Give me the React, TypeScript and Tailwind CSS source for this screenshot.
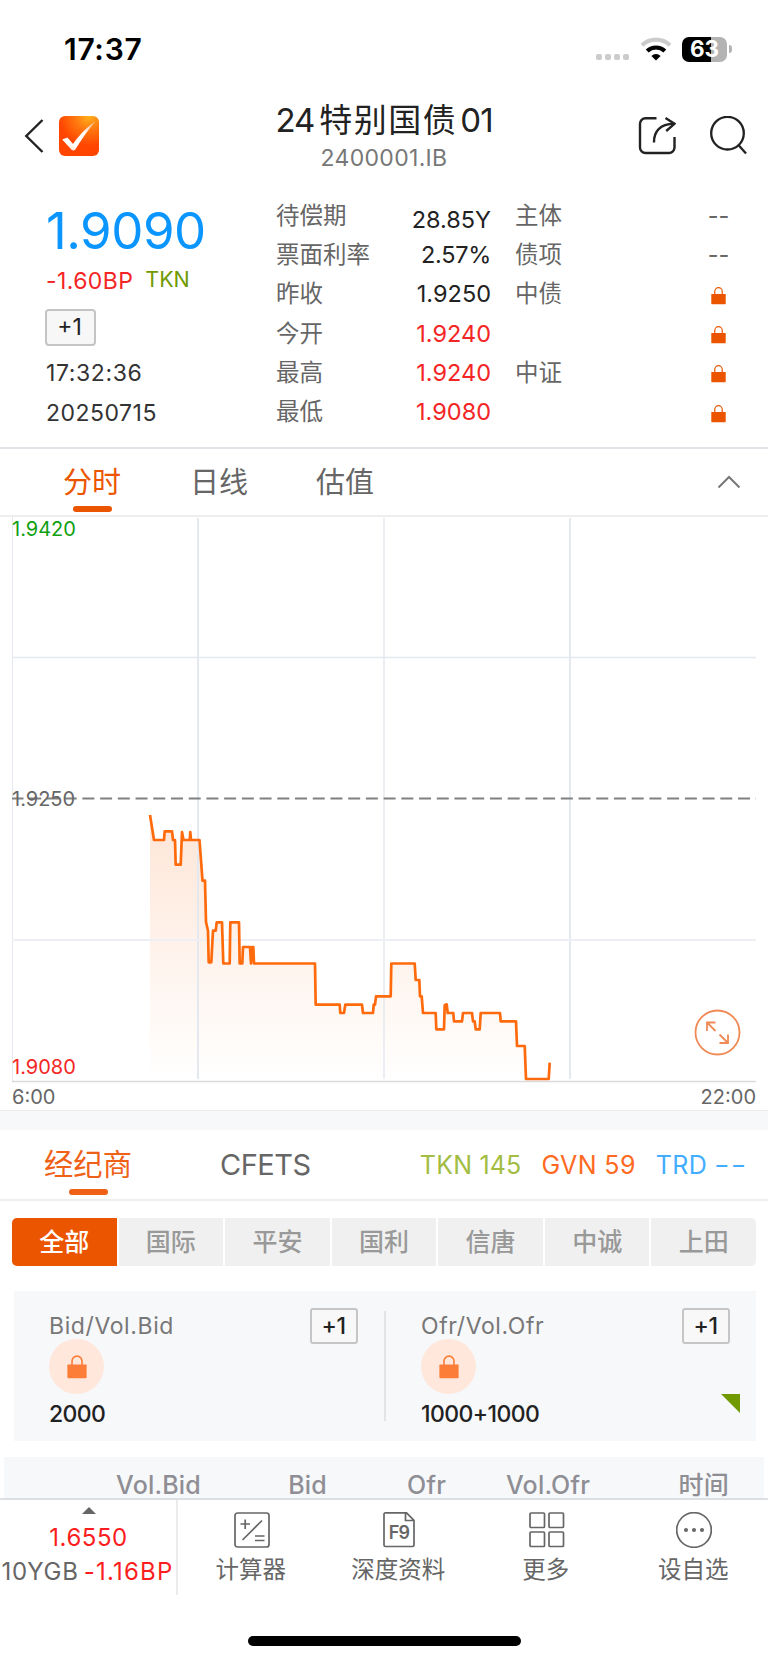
import React from 'react';

const quoteRows = [
  { label: '待偿期', value: '28.85Y', valueClass: 'text-[#222] pt-[8px]', side: '主体', mark: '--' },
  { label: '票面利率', value: '2.57%', valueClass: 'text-[#222] tracking-[-0.3px]', side: '债项', mark: '--' },
  { label: '昨收', value: '1.9250', valueClass: 'text-[#222]', side: '中债', mark: 'lock' },
  { label: '今开', value: '1.9240', valueClass: 'text-[#f42525]', side: '', mark: 'lock' },
  { label: '最高', value: '1.9240', valueClass: 'text-[#f42525]', side: '中证', mark: 'lock' },
  { label: '最低', value: '1.9080', valueClass: 'text-[#f42525]', side: '', mark: 'lock' },
];

const brokers = ['全部', '国际', '平安', '国利', '信唐', '中诚', '上田'];

const linePoints =
  '150,815 154,840 164,840 164.7,831.3 172,831.3 173,840 175,840 175.7,864.7 180.7,864.7 182,832 183.5,840 189.7,840 190.3,832 191,840 199.5,840 202.5,880.7 205,880.7 206,922 208,930.7 208.7,962.3 211.3,962.3 213,930.7 215.7,930.7 216.7,922.3 222,922.3 223.3,963.5 229.7,963.5 230.3,922.3 239,922.3 239.7,963.5 242.3,963.5 243,947 250,947 251,963.5 252,947 253.3,947 254,963.5 315,963.5 315.7,1004.7 339.7,1004.7 340.3,1013 344,1013 345.3,1004.7 362,1004.7 363,1013 373,1013 373.7,1004.7 375,1004.7 376,996.3 390.7,996.3 391.3,963.5 414.7,963.5 415.7,980 419.3,980 420,996.3 421.7,996.3 423,1013 435.7,1013 436.3,1029.3 444,1029.3 444.7,1005.3 446.7,1004.3 447.7,1013 453.3,1013 454,1021.3 462,1021.3 463,1013 472,1013 473,1021.3 474.7,1021.3 475.7,1029.3 479.7,1029.3 480.7,1013 500,1013 500.7,1021.3 516,1021.3 517,1046 524.7,1046 526,1079 548.7,1079 549.7,1062.7';

const LockIcon: React.FC<{ className?: string }> = ({ className }) => (
  <svg viewBox="0 0 16 19" className={className} fill="none">
    <path d="M4 9V5.2a4 4 0 0 1 8 0V9" stroke="currentColor" strokeWidth="1.3" />
    <rect x="0.3" y="7.8" width="15.4" height="11" rx="0.7" fill="currentColor" />
  </svg>
);

const StatusBar: React.FC = () => (
  <div className="flex h-[98px] shrink-0 items-center pr-9 pl-16 text-black">
    <span className="text-[30px] leading-none font-semibold tracking-[0.7px]">17:37</span>
    <div className="ml-auto flex items-center">
      <div className="mt-4 mr-[11px] flex gap-[3px]">
        <i className="size-[6px] rounded-[2px] bg-[#ccc]" />
        <i className="size-[6px] rounded-[2px] bg-[#ccc]" />
        <i className="size-[6px] rounded-[2px] bg-[#ccc]" />
        <i className="size-[6px] rounded-[2px] bg-[#ccc]" />
      </div>
      <svg width="32" height="24" viewBox="0 0 32 24" fill="none" className="mr-[10px]">
        <path d="M2 8.2a20.5 20.5 0 0 1 28 0" stroke="#ccc" strokeWidth="4.2" />
        <path d="M7.2 14a12.8 12.8 0 0 1 17.6 0" stroke="#000" strokeWidth="4.2" />
        <path d="M16 23.6l-4.6-4.7a6.6 6.6 0 0 1 9.2 0z" fill="#000" />
      </svg>
      <div className="flex h-[25px] w-[45px] items-center justify-center rounded-[7px] bg-linear-to-r from-black from-64% to-[#b3b3b3] to-64% text-[22.5px] leading-none font-bold text-white">
        63
      </div>
      <i className="ml-[2px] h-[8px] w-[3px] rounded-r-full bg-[#b3b3b3]" />
    </div>
  </div>
);

const Header: React.FC = () => (
  <header className="grid h-[82px] shrink-0 grid-cols-[1fr_auto_1fr]">
    <div className="flex items-start pt-[18px] pl-6">
      <svg width="20" height="40" viewBox="0 0 20 40" fill="none">
        <path d="M18.5 4L2.3 20l16.2 16" stroke="#222" strokeWidth="2.4" />
      </svg>
      <svg width="40" height="40" viewBox="0 0 40 40" className="ml-[15px]">
        <defs>
          <radialGradient id="logoGlow" cx="0.75" cy="0" r="0.75">
            <stop offset="0" stopColor="#ffb31c" />
            <stop offset="0.45" stopColor="#ff7a10" />
            <stop offset="1" stopColor="#ff4500" />
          </radialGradient>
          <linearGradient id="logoTick" x1="0.8" y1="0" x2="0.2" y2="1">
            <stop offset="0" stopColor="#ffb78a" />
            <stop offset="0.35" stopColor="#fff" />
            <stop offset="0.8" stopColor="#fff" />
            <stop offset="1" stopColor="#ffd9c9" />
          </linearGradient>
        </defs>
        <rect width="40" height="40" rx="6" fill="url(#logoGlow)" />
        <path d="M36.5 5.5C29 10 21 18 14 28L8.5 21.5 3.2 23.5 12.5 33.8c1.3 1.2 3 .9 4-.6C22 24 29 14 36.5 5.5z" fill="url(#logoTick)" />
      </svg>
    </div>
    <div className="flex flex-col items-center">
      <h1 className="flex h-[43px] items-center pt-px text-[33px] leading-none text-[#222]">
        <span className="tracking-[-1px]">24</span>
        <span className="mr-[3px] ml-[5px] tracking-[1.5px]">特别国债</span>
        <span className="tracking-[-1px]">01</span>
      </h1>
      <p className="flex h-[34px] items-center text-[23px] leading-none tracking-[0.3px] text-[#777]">2400001.IB</p>
    </div>
    <div className="flex items-start justify-end pt-[18px] pr-5">
      <svg width="38" height="40" viewBox="0 0 38 40" fill="none" stroke="#222" strokeWidth="2.4">
        <path d="M18.5 2.3H7.5a5.5 5.5 0 0 0-5.5 5.5V31.5a5.5 5.5 0 0 0 5.5 5.5H31a5.5 5.5 0 0 0 5.5-5.500V21" />
        <path d="M16 26.500c-.3-11 6-18.500 20-18.700" />
        <path d="M27.500 2l9 5.800-8.300 7.200" />
      </svg>
      <svg width="40" height="40" viewBox="0 0 40 40" fill="none" stroke="#222" strokeWidth="2.3" className="ml-[32px]">
        <circle cx="19.5" cy="17.200" r="16.300" />
        <path d="M30 28.500l8 9" />
      </svg>
    </div>
  </header>
);

const Quote: React.FC = () => (
  <section className="flex h-[269px] shrink-0 border-b-2 border-[#e1e2e8] pl-[45px]">
    <div className="flex w-[231px] flex-col items-start leading-none text-[#333]">
      <div className="mt-[18px] ml-px flex h-[64px] items-center text-[51px] tracking-[-0.5px] text-[#0a95ff]">1.9090</div>
      <div className="mt-px ml-px flex h-[37px] items-center text-[23px]">
        <span className="tracking-[0.4px] text-[#f42525]">-1.60BP</span>
        <span className="mb-[3px] ml-[12px] text-[21.5px] text-[#719a00]">TKN</span>
      </div>
      <div className="mt-[9px] flex h-[37px] w-[51px] items-center justify-center rounded-[4px] border-2 border-[#c4c4c4] bg-[#f7f7f7] pr-[2px] text-[23px] text-[#222]">
        +1
      </div>
      <div className="mt-[8px] ml-px flex h-[39px] items-center text-[23px] tracking-[0.6px]">17:32:36</div>
      <div className="mt-px ml-px flex h-[39px] items-center text-[23px] tracking-[0.5px]">20250715</div>
    </div>
    <div className="flex flex-1 flex-col pt-[16px]">
      {quoteRows.map((row) => (
        <div key={row.label} className="flex h-[39.3px] items-center text-[23.5px] leading-none text-[#666]">
          <span className="w-[110px]">{row.label}</span>
          <span className={`w-[105px] text-right ${row.valueClass}`}>{row.value}</span>
          <span className="ml-[24px] w-[169px]">{row.side}</span>
          <span className="flex w-[69px] justify-center">
            {row.mark === 'lock' ? <LockIcon className="mt-[2px] h-[19px] w-[15px] text-[#ec5500]" /> : row.mark}
          </span>
        </div>
      ))}
    </div>
  </section>
);

const ChartTabs: React.FC = () => (
  <nav className="flex h-[68px] shrink-0 items-start border-b-2 border-[#eee] pr-[27px] pl-[63px] text-[29px] leading-none text-[#666]">
    <div className="flex w-[58px] flex-col items-center text-[#ec5500]">
      <span className="flex h-[57px] items-center pt-[10px]">分时</span>
      <i className="h-[6px] w-[39px] rounded-full bg-[#ec5500]" />
    </div>
    <span className="ml-[69px] leading-[68px]">日线</span>
    <span className="ml-[68px] leading-[68px]">估值</span>
    <svg width="24" height="16" viewBox="0 0 24 16" fill="none" className="mt-[25px] ml-auto">
      <path d="M1.5 13.5L12 3l10.5 10.5" stroke="#777" strokeWidth="2" />
    </svg>
  </nav>
);

const PriceChart: React.FC = () => (
  <svg width="768" height="593" viewBox="0 517 768 593" className="block shrink-0" fill="none">
    <defs>
      <linearGradient id="area" x1="0" y1="815" x2="0" y2="1081" gradientUnits="userSpaceOnUse">
        <stop offset="0" stopColor="#f96a14" stopOpacity="0.17" />
        <stop offset="1" stopColor="#f96a14" stopOpacity="0" />
      </linearGradient>
    </defs>
    <polygon points={`${linePoints} 549.7,1081 150,1081`} fill="url(#area)" />
    <g stroke="#e4e8ef">
      <path d="M12.5 517V1081" />
      <path d="M198 518V1079M570 518V1079" strokeWidth="2" />
      <path d="M384 518V1079" strokeWidth="1.5" />
      <path d="M12 657.5H756" strokeWidth="1.5" />
      <path d="M12 940H756" stroke="#eeeff4" strokeWidth="2" />
    </g>
    <path d="M12 1081.5H756" stroke="#d9dade" strokeWidth="1.5" />
    <path d="M12 798.5H756" stroke="#808080" strokeWidth="2.2" strokeDasharray="12 5.72" strokeDashoffset="0.5" />
    <polyline points={linePoints} stroke="#ff6a0c" strokeWidth="2.7" strokeLinejoin="round" />
    <g fontSize="20">
      <text x="12" y="535.5" fill="#10a010">1.9420</text>
      <text x="12" y="805.5" fill="#666">1.9250</text>
      <text x="12" y="1074" fill="#f42525">1.9080</text>
      <text x="12" y="1103.5" fill="#666">6:00</text>
      <text x="756" y="1103.5" fill="#666" textAnchor="end">22:00</text>
    </g>
    <g stroke="#f08a55" strokeWidth="1.8">
      <circle cx="717.5" cy="1032.5" r="22" />
      <path d="M715.5 1031l-8.5-8.5M707 1031v-8.5h8.5" />
      <path d="M719.5 1034.5l8.5 8.5M728 1034.5v8.5h-8.5" />
    </g>
  </svg>
);

const BrokerTabs: React.FC = () => (
  <nav className="flex h-[71px] shrink-0 items-start border-b-2 border-[#eee] pl-[44px] leading-none">
    <div className="flex w-[88px] flex-col items-center text-[29.3px] whitespace-nowrap text-[#f06118]">
      <span className="flex h-[59px] items-center pt-[11px]">经纪商</span>
      <i className="h-[6px] w-[39px] rounded-full bg-[#f06118]" />
    </div>
    <span className="ml-[88px] text-[29px] leading-[70px] tracking-[-0.5px] text-[#666]">CFETS</span>
    <div className="ml-auto flex pr-[21px] text-[25px] leading-[70px]">
      <span className="tracking-[0.2px] text-[#a2bd42]">TKN 145</span>
      <span className="ml-[20px] tracking-[0.4px] text-[#ff6a22]">GVN 59</span>
      <span className="ml-[20px] flex tracking-[0.3px] text-[#43adff]">
        TRD
        <span className="ml-[7px] w-[33px] origin-left scale-x-[1.35] tracking-[1px]">--</span>
      </span>
    </div>
  </nav>
);

const BrokerFilter: React.FC = () => (
  <div className="mx-3 mt-[17px] flex h-[48px] shrink-0 gap-[2px] overflow-hidden rounded-[5px] text-[25px] font-medium">
    {brokers.map((name, i) => (
      <div
        key={name}
        className={`flex flex-1 items-center justify-center leading-none ${i === 0 ? 'bg-[#ec5500] text-white' : 'bg-[#f0f0f0] text-[#999]'}`}
      >
        {name}
      </div>
    ))}
  </div>
);

const OfferSide: React.FC<{ title: string; volume: string }> = ({ title, volume }) => (
  <div className="flex h-full flex-1 flex-col pr-[26px] pl-[35px] leading-none">
    <div className="flex h-[34px] shrink-0 items-center justify-between text-[23px] tracking-[0.6px] text-[#777]">
      {title}
      <div className="flex h-[36px] w-[48px] items-center justify-center rounded-[3px] border-2 border-[#c6c6c6] bg-[#f8f8f8] pr-px font-medium tracking-[-0.5px] text-[#222]">
        +1
      </div>
    </div>
    <div className="mt-[-4px] flex size-[55px] shrink-0 items-center justify-center rounded-full bg-[#ffe7dc]">
      <LockIcon className="h-[25px] w-[20px] text-[#fb7d38]" />
    </div>
    <span className="flex h-[40px] shrink-0 items-center text-[23px] font-medium tracking-[-0.6px] text-[#222]">{volume}</span>
  </div>
);

const BestOffers: React.FC = () => (
  <section className="relative mt-[25px] mr-3 ml-[14px] flex h-[150px] shrink-0 items-center bg-[#f7f8fa] pt-[18px] pb-[18px]">
    <OfferSide title="Bid/Vol.Bid" volume="2000" />
    <i className="h-[110px] w-[2px] shrink-0 bg-[#e3e4e8]" />
    <OfferSide title="Ofr/Vol.Ofr" volume="1000+1000" />
    <svg width="19" height="19" viewBox="0 0 19 19" className="absolute right-[16px] bottom-[28px]">
      <path d="M0 0h19v19z" fill="#719a00" />
    </svg>
  </section>
);

const TableHead: React.FC = () => (
  <div className="mx-1 mt-[16px] flex h-[41px] shrink-0 bg-[#f7f8fa] pt-[16px] text-[25px] leading-[25px] font-medium tracking-[0.2px] text-[#8e8e94]">
    <span className="w-[197px] text-right">Vol.Bid</span>
    <span className="w-[126px] text-right">Bid</span>
    <span className="w-[119px] text-right">Ofr</span>
    <span className="w-[144px] text-right">Vol.Ofr</span>
    <span className="w-[139px] text-right">时间</span>
  </div>
);

const actions = [
  {
    label: '计算器',
    icon: (
      <>
        <rect x="1" y="1" width="34" height="34" rx="2.5" />
        <path d="M6.5 12h9.5M11.2 7.5v9.5M8.5 28L28 8.5M21 24h9.5M21 28.5h9.5" />
      </>
    ),
  },
  {
    label: '深度资料',
    icon: (
      <>
        <path d="M5 .8H25.5l7.5 7.5V33a1.5 1.5 0 0 1-1.5 1.5H4.5A1.5 1.5 0 0 1 3 33V2.5A1.7 1.7 0 0 1 5 .8zM24.5 1v7.5H33" />
        <text x="18" y="27" textAnchor="middle" fontSize="18" fontWeight="600" letterSpacing="-0.8" fill="#666" stroke="none">F9</text>
      </>
    ),
  },
  {
    label: '更多',
    icon: (
      <>
        <rect x="1" y="1" width="14.5" height="14.5" rx="1" />
        <rect x="20" y="1" width="14.5" height="14.5" rx="1" />
        <rect x="1" y="20" width="14.5" height="14.5" rx="1" />
        <rect x="20" y="20" width="14.5" height="14.5" rx="1" />
      </>
    ),
  },
  {
    label: '设自选',
    icon: (
      <>
        <circle cx="18" cy="18" r="17.3" />
        <g fill="#666" stroke="none">
          <circle cx="10" cy="18" r="2" />
          <circle cx="18" cy="18" r="2" />
          <circle cx="26" cy="18" r="2" />
        </g>
      </>
    ),
  },
];

const BottomBar: React.FC = () => (
  <footer className="flex h-[97px] shrink-0 border-t-2 border-[#dcdfe4] leading-none">
    <div className="flex w-[178px] shrink-0 flex-col items-center border-r-2 border-[#ebebeb] whitespace-nowrap text-[24px]">
      <svg width="14" height="7" viewBox="0 0 14 7" className="mt-[7px] ml-px">
        <path d="M0 7L7 0l7 7z" fill="#666" />
      </svg>
      <span className="ml-px flex h-[46px] items-center pt-px tracking-[0.5px] text-[#fa1e1e]">1.6550</span>
      <span className="flex h-[23px] items-center pt-px pr-px tracking-[0.8px] text-[#666]">
        10YGB
        <span className="ml-[5px] tracking-[1.2px] text-[#fa1e1e]">-1.16BP</span>
      </span>
    </div>
    {actions.map((a) => (
      <div key={a.label} className="flex flex-1 flex-col items-center pt-[12px] text-[23.5px] text-[#666]">
        <svg width="36" height="36" viewBox="0 0 36 36" fill="none" stroke="#666" strokeWidth="1.7">
          {a.icon}
        </svg>
        <span className="mt-[10px] pr-[2px]">{a.label}</span>
      </div>
    ))}
  </footer>
);

const App: React.FC = () => {
  return (
    <div className="flex h-[1663px] w-[768px] flex-col overflow-hidden bg-white font-['Inter','Noto_Sans_CJK_SC',sans-serif]">
      <StatusBar />
      <Header />
      <Quote />
      <ChartTabs />
      <PriceChart />
      <div className="h-[20px] shrink-0 border-t border-[#e9eaec] bg-[#f7f8fa]" />
      <BrokerTabs />
      <BrokerFilter />
      <BestOffers />
      <TableHead />
      <BottomBar />
      <div className="mx-auto mt-[41px] h-[10px] w-[273px] shrink-0 rounded-full bg-black" />
    </div>
  );
};

export default App;
